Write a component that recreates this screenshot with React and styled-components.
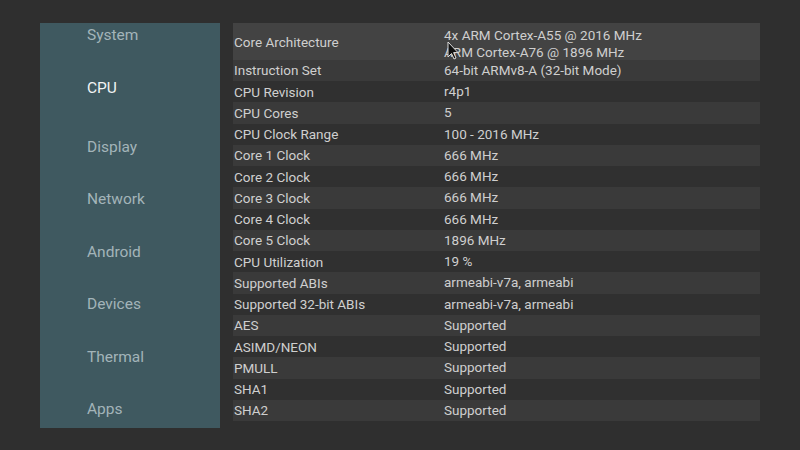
import React from "react";
import styled, { createGlobalStyle } from "styled-components";

const Global = createGlobalStyle`
  html, body { margin: 0; padding: 0; background: #2f2f2f; }
  body { font-family: Roboto, "Noto Sans", sans-serif; -webkit-font-smoothing: antialiased; }
`;

const Screen = styled.div`
  position: relative;
  width: 800px;
  height: 450px;
  background: #2f2f2f;
  display: flex;
  align-items: flex-start;
  padding: 23px 0 0 40px;
  box-sizing: border-box;
  overflow: hidden;
`;

const Sidebar = styled.nav`
  width: 180px;
  height: 405px;
  background: #3f5960;
  display: flex;
  flex-direction: column;
  padding: 2px 0 0 47px;
  box-sizing: border-box;
  flex-shrink: 0;
`;

const NavItem = styled.div`
  height: 20px;
  line-height: 20px;
  font-size: 15.5px;
  color: ${(p) => (p.$active ? "#f2f4f4" : "#a3b4b9")};
  margin-bottom: ${(p) => (p.$active ? "39px" : "32.5px")};
  white-space: nowrap;
`;

const Table = styled.div`
  margin-left: 13px;
  width: 527px;
  display: flex;
  flex-direction: column;
`;

const Row = styled.div`
  display: grid;
  grid-template-columns: 211px 1fr;
  align-items: center;
  height: ${(p) => (p.$tall ? "36.75px" : "21.25px")};
  background: ${(p) =>
    p.$focus ? "#434343" : p.$odd ? "#3a3a3a" : "#303030"};
  color: #cfcfcf;
  font-size: 13.5px;
`;

const Label = styled.div`
  padding-left: 1px;
  white-space: nowrap;
`;

const Value = styled.div`
  display: flex;
  flex-direction: column;
  line-height: 17px;
  white-space: nowrap;
  padding-top: ${(p) => (p.$multi ? "4px" : "0")};
`;

const Cursor = styled.svg`
  position: absolute;
  left: 447px;
  top: 41px;
  width: 12px;
  height: 19px;
`;

const nav = ["System", "CPU", "Display", "Network", "Android", "Devices", "Thermal", "Apps"];

const rows = [
  ["Core Architecture", ["4x ARM Cortex-A55 @ 2016 MHz", "ARM Cortex-A76 @ 1896 MHz"]],
  ["Instruction Set", "64-bit ARMv8-A (32-bit Mode)"],
  ["CPU Revision", "r4p1"],
  ["CPU Cores", "5"],
  ["CPU Clock Range", "100 - 2016 MHz"],
  ["Core 1 Clock", "666 MHz"],
  ["Core 2 Clock", "666 MHz"],
  ["Core 3 Clock", "666 MHz"],
  ["Core 4 Clock", "666 MHz"],
  ["Core 5 Clock", "1896 MHz"],
  ["CPU Utilization", "19 %"],
  ["Supported ABIs", "armeabi-v7a, armeabi"],
  ["Supported 32-bit ABIs", "armeabi-v7a, armeabi"],
  ["AES", "Supported"],
  ["ASIMD/NEON", "Supported"],
  ["PMULL", "Supported"],
  ["SHA1", "Supported"],
  ["SHA2", "Supported"],
];

export default function App() {
  return (
    <>
      <Global />
      <Screen>
        <Sidebar>
          {nav.map((n) => (
            <NavItem key={n} $active={n === "CPU"}>{n}</NavItem>
          ))}
        </Sidebar>
        <Table>
          {rows.map(([l, v], i) => (
            <Row key={l} $tall={i === 0} $focus={i === 0} $odd={i % 2 === 1}>
              <Label>{l}</Label>
              <Value $multi={Array.isArray(v)}>
                {Array.isArray(v) ? v.map((t) => <span key={t}>{t}</span>) : v}
              </Value>
            </Row>
          ))}
        </Table>
        <Cursor viewBox="0 0 12 19">
          <path d="M1 1 L1 16 L4.5 12.5 L7 18 L9 17 L6.6 11.6 L11 11.6 Z" fill="#111" stroke="#ddd" strokeWidth="1" strokeLinejoin="round" />
        </Cursor>
      </Screen>
    </>
  );
}
